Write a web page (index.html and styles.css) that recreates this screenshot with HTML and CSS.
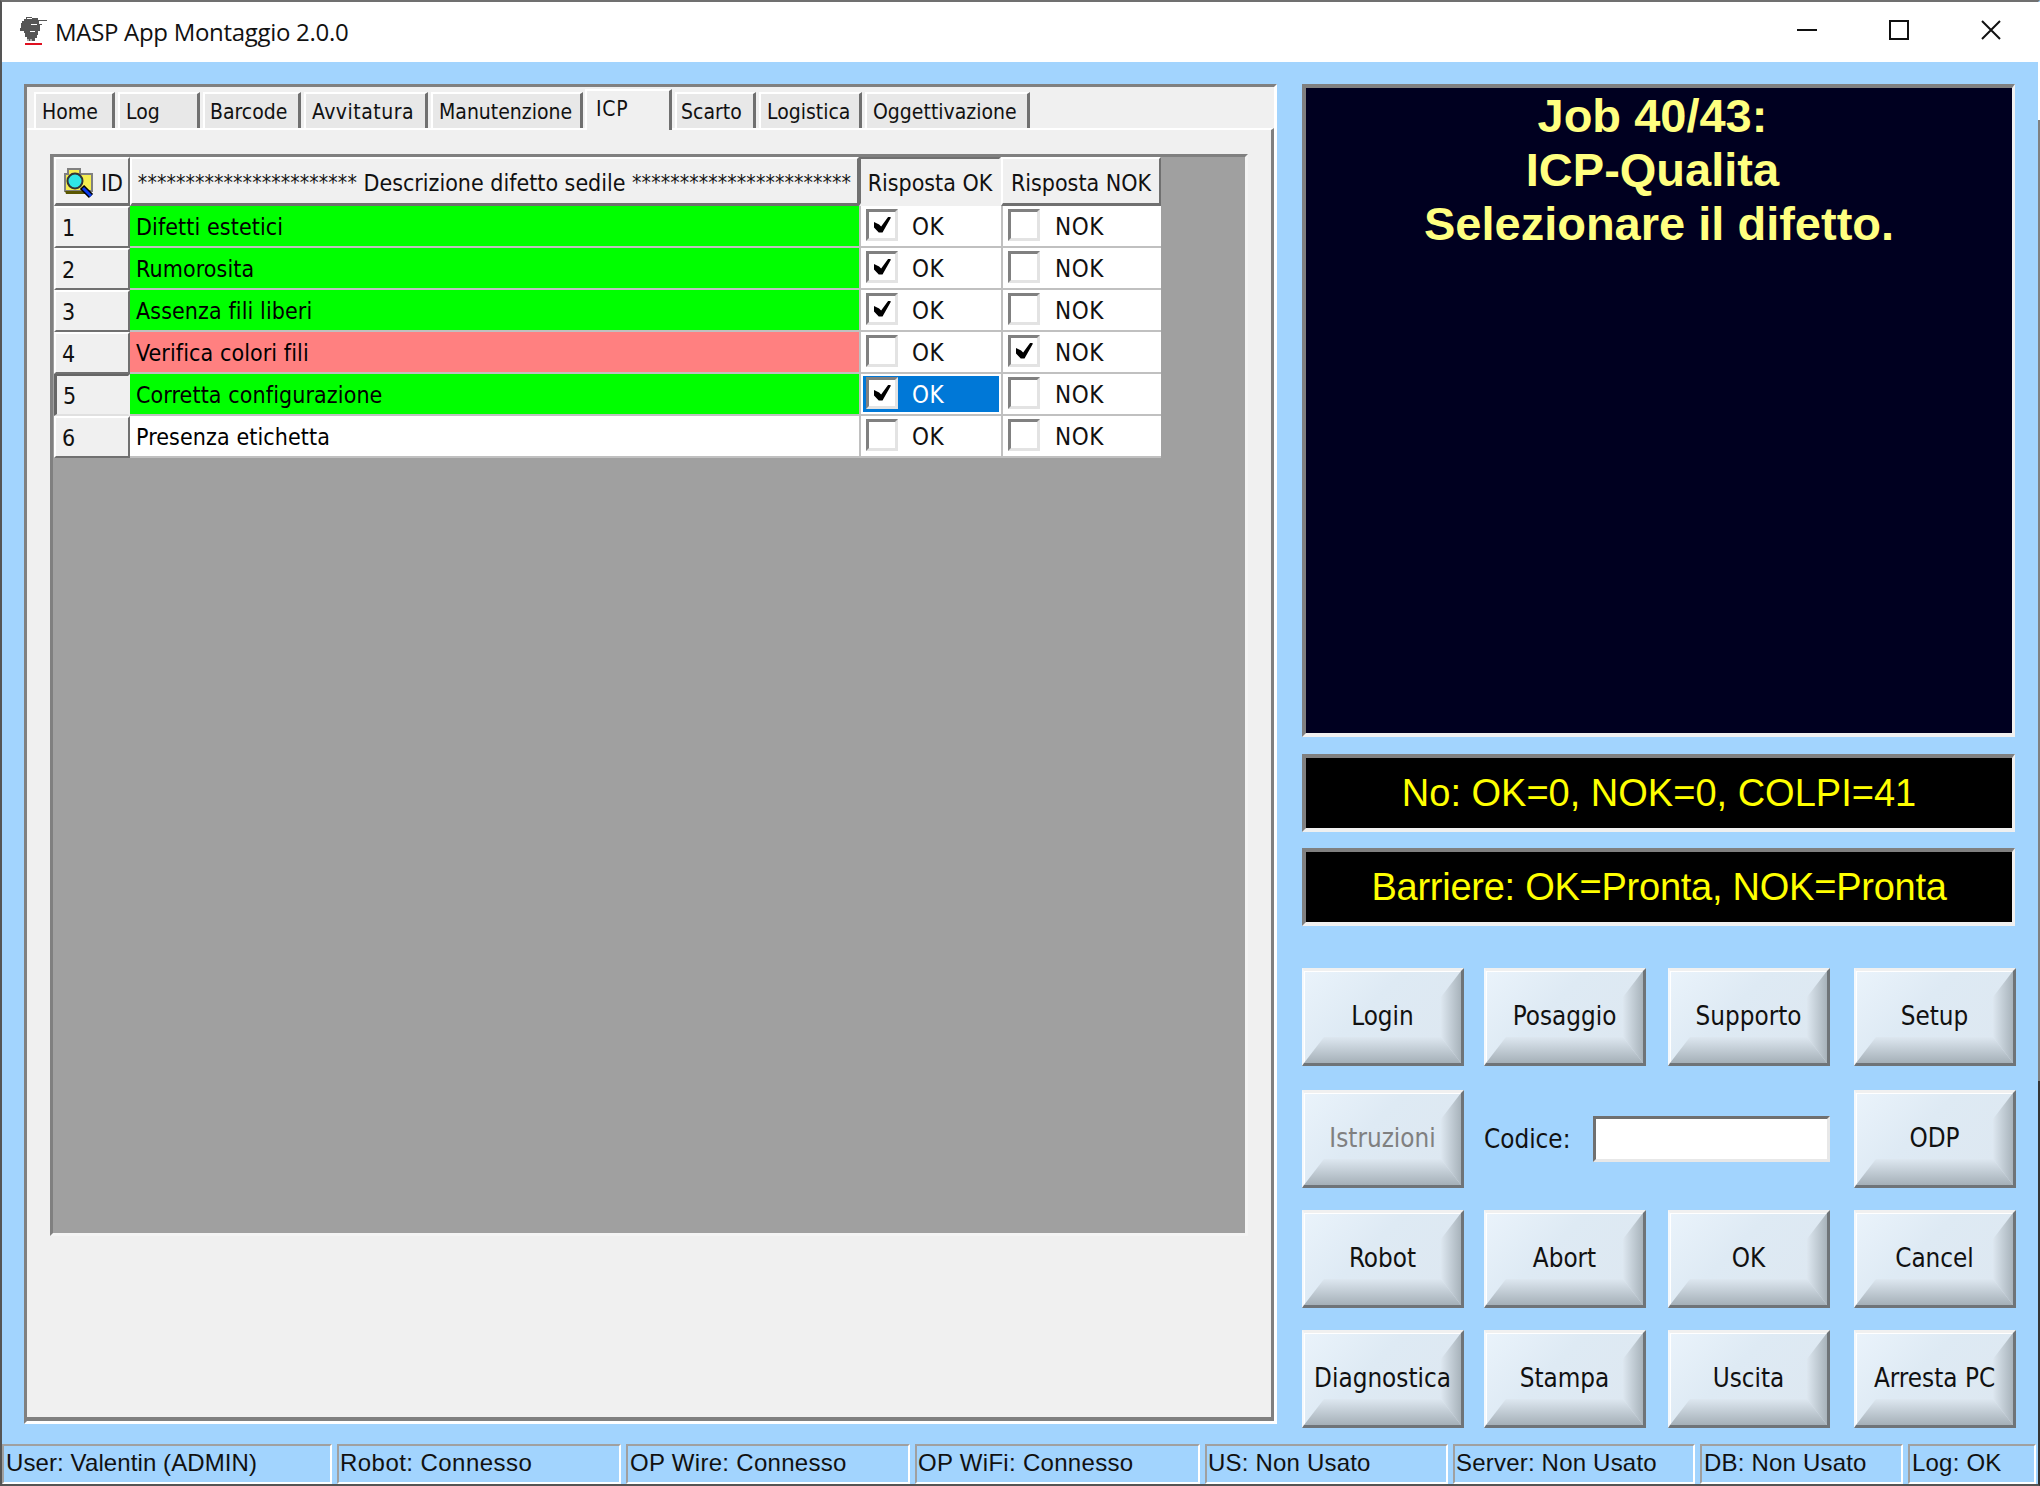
FILE: index.html
```html
<!DOCTYPE html>
<html lang="en">
<head>
    <meta charset="UTF-8">
    <meta name="viewport" content="width=device-width, initial-scale=1.0">
    <title>MASP App Montaggio 2.0.0</title>
    <link rel="stylesheet" href="styles.css">
</head>
<body>
    <div class="window">
        <div class="titlebar">
            <svg class="app-icon" width="30" height="32" viewBox="0 0 30 32">
                <path fill="#555" d="M7 2h6v1h6v2h9v1h-8v3h3v1h-2v6h-2v4h-1v3h-2v3H8v-4H6v-4H5v-2H1v-3h1V8h1V6h2V4h2z"/>
                <path fill="none" stroke="#fff" stroke-width="1" d="M8 3.5h5M12 9.5h6M11 16.5h5M9 24v3M12 24v3"/>
                <rect x="6" y="28" width="17" height="2" fill="#e01020"/>
            </svg>
            <span class="app-title">MASP App Montaggio 2.0.0</span>
            <div class="win-buttons">
                <svg width="22" height="22" viewBox="0 0 22 22"><path d="M1 11h20" stroke="#111" stroke-width="2"/></svg>
                <svg width="22" height="22" viewBox="0 0 22 22"><rect x="2" y="2" width="18" height="18" fill="none" stroke="#111" stroke-width="2"/></svg>
                <svg width="22" height="22" viewBox="0 0 22 22"><path d="M2 2l18 18M20 2L2 20" stroke="#111" stroke-width="2"/></svg>
            </div>
        </div>

        <div class="client">
            <div class="main">
                <div class="left-panel">
                    <div class="tabs">
                        <div class="tab w-home">Home</div>
                        <div class="tab w-log">Log</div>
                        <div class="tab w-barcode">Barcode</div>
                        <div class="tab w-avvit">Avvitatura</div>
                        <div class="tab w-manut">Manutenzione</div>
                        <div class="tab tab-active">ICP</div>
                        <div class="tab w-scarto">Scarto</div>
                        <div class="tab w-logist">Logistica</div>
                        <div class="tab w-ogg">Oggettivazione</div>
                    </div>
                    <div class="tab-body">
                        <div class="grid">
                            <div class="grid-row grid-head">
                                <div class="head-cell head-id">
                                    <svg width="30" height="32" viewBox="0 0 30 32">
                                        <path fill="#f5ee50" stroke="#808080" stroke-width="2" d="M1 7h3V2h12v5h12v17H1z"/>
                                        <path fill="#5a5600" d="M1 24h20v3H2z"/>
                                        <path d="M18 20l9 9" stroke="#000" stroke-width="6"/>
                                        <path d="M19 21l8 8" stroke="#0a3cf0" stroke-width="3"/>
                                        <circle cx="11" cy="14" r="7.5" fill="#2fe6e6" stroke="#333" stroke-width="2"/>
                                    </svg>
                                    <span>ID</span>
                                </div>
                                <div class="head-cell head-desc"><span class="stars">***********************</span>&nbsp;Descrizione difetto sedile&nbsp;<span class="stars">***********************</span></div>
                                <div class="head-cell head-ok">Risposta OK</div>
                                <div class="head-cell head-nok">Risposta NOK</div>
                            </div>

                            <div class="grid-row">
                                <div class="row-id">1</div>
                                <div class="desc green">Difetti estetici</div>
                                <div class="answer"><span class="check on"></span><span class="ans-ok">OK</span></div>
                                <div class="answer"><span class="check"></span><span class="ans-nok">NOK</span></div>
                            </div>
                            <div class="grid-row">
                                <div class="row-id">2</div>
                                <div class="desc green">Rumorosita</div>
                                <div class="answer"><span class="check on"></span><span class="ans-ok">OK</span></div>
                                <div class="answer"><span class="check"></span><span class="ans-nok">NOK</span></div>
                            </div>
                            <div class="grid-row">
                                <div class="row-id">3</div>
                                <div class="desc green">Assenza fili liberi</div>
                                <div class="answer"><span class="check on"></span><span class="ans-ok">OK</span></div>
                                <div class="answer"><span class="check"></span><span class="ans-nok">NOK</span></div>
                            </div>
                            <div class="grid-row">
                                <div class="row-id">4</div>
                                <div class="desc red">Verifica colori fili</div>
                                <div class="answer"><span class="check"></span><span class="ans-ok">OK</span></div>
                                <div class="answer"><span class="check on"></span><span class="ans-nok">NOK</span></div>
                            </div>
                            <div class="grid-row">
                                <div class="row-id row-id-current">5</div>
                                <div class="desc green">Corretta configurazione</div>
                                <div class="answer selected"><span class="check on"></span><span class="ans-ok">OK</span></div>
                                <div class="answer"><span class="check"></span><span class="ans-nok">NOK</span></div>
                            </div>
                            <div class="grid-row">
                                <div class="row-id">6</div>
                                <div class="desc">Presenza etichetta</div>
                                <div class="answer"><span class="check"></span><span class="ans-ok">OK</span></div>
                                <div class="answer"><span class="check"></span><span class="ans-nok">NOK</span></div>
                            </div>
                        </div>
                    </div>
                </div>

                <div class="right-panel">
                    <div class="inset job-box">Job 40/43:&nbsp;<br>ICP-Qualita&nbsp;<br>Selezionare il difetto.</div>
                    <div class="inset info-box">No: OK=0, NOK=0, COLPI=41</div>
                    <div class="inset info-box info-narrow">Barriere: OK=Pronta, NOK=Pronta</div>
                    <div class="buttons">
                        <button class="btn">Login</button>
                        <button class="btn">Posaggio</button>
                        <button class="btn">Supporto</button>
                        <button class="btn">Setup</button>
                        <button class="btn btn-disabled">Istruzioni</button>
                        <div class="code-field">
                            <label for="codice">Codice:</label>
                            <input type="text" id="codice">
                        </div>
                        <button class="btn">ODP</button>
                        <button class="btn">Robot</button>
                        <button class="btn">Abort</button>
                        <button class="btn">OK</button>
                        <button class="btn">Cancel</button>
                        <button class="btn">Diagnostica</button>
                        <button class="btn">Stampa</button>
                        <button class="btn">Uscita</button>
                        <button class="btn">Arresta PC</button>
                    </div>
                </div>
            </div>

            <div class="statusbar">
                <div class="status s-user">User: Valentin (ADMIN)</div>
                <div class="status s-robot">Robot: Connesso</div>
                <div class="status s-wire">OP Wire: Connesso</div>
                <div class="status s-wifi">OP WiFi: Connesso</div>
                <div class="status s-us">US: Non Usato</div>
                <div class="status s-server">Server: Non Usato</div>
                <div class="status s-db">DB: Non Usato</div>
                <div class="status s-log">Log: OK</div>
            </div>
        </div>
    </div>
</body>
</html>
```
FILE: styles.css
```css
* {
    box-sizing: border-box;
}
html, body {
    margin: 0;
    height: 100%;
}
body {
    font-family: "Liberation Sans", Arial, sans-serif;
    background-color: #a2d4fe;
    overflow: hidden;
}
.window {
    width: 2040px;
    height: 1486px;
    border: 2px solid #555;
    border-top-color: #707070;
    border-right-color: transparent;
    /* right frame edge changes colour down the window */
    background: linear-gradient(#fff 0 120px, #808080 120px 1081px, #333 1081px) right top / 2px 100% no-repeat border-box;
    display: flex;
    flex-direction: column;
}

/* title bar */
.titlebar {
    height: 60px;
    background: white;
    display: flex;
    align-items: center;
    flex-shrink: 0;
}
.app-icon {
    margin-left: 17px;
    margin-top: -2px;
}
.app-title {
    font-family: "Open Sans", sans-serif;
    font-size: 24px;
    color: #111;
    margin-left: 6px;
    margin-top: -2px;
    letter-spacing: -0.3px;
}
.win-buttons {
    margin-left: auto;
    margin-right: 36px;
    margin-top: -4px;
    display: flex;
    gap: 70px;
}

.client {
    flex: 1;
    display: flex;
    flex-direction: column;
    padding-top: 22px;
}
.main {
    display: flex;
    height: 1340px;
    padding-left: 22px;
}

/* left side */
.left-panel {
    width: 1253px;
    height: 1340px;
    background: #f0f0f0;
    border: 3px solid #808080;
    border-right-color: #fff;
    border-bottom-color: #fff;
    display: flex;
    flex-direction: column;
}
.tabs {
    display: flex;
    align-items: flex-end;
    height: 41px;
    padding-left: 7px;
    gap: 3px;
    font-family: "DejaVu Sans Condensed", "DejaVu Sans", sans-serif;
    font-size: 21px;
    color: #111;
}
.tab {
    height: 36px;
    background: #e8e8e8;
    border-top: 2px solid #fff;
    border-left: 2px solid #fff;
    border-right: 3px solid #707070;
    padding: 4px 0 0 6px;
    line-height: 28px;
    white-space: nowrap;
}
.tab-active {
    width: 87px;
    height: 41px;
    background: #f0f0f0;
    margin: 0 0 -2px -1px;
    padding: 4px 0 0 9px;
    position: relative;
    letter-spacing: 0.8px;
}
.w-home { width: 81px; }
.w-log { width: 82px; }
.w-barcode { width: 98px; padding-left: 5px; }
.w-avvit { width: 124px; letter-spacing: 0.5px; }
.w-manut { width: 152px; }
.w-scarto { width: 81px; padding-left: 4px; }
.w-logist { width: 103px; }
.w-ogg { width: 165px; }
.tab-body {
    flex: 1;
    border-top: 2px solid #fff;
    border-right: 3px solid #808080;
    border-bottom: 4px solid #808080;
    padding: 24px 0 0 23px;
}

/* defect grid */
.grid {
    width: 1198px;
    height: 1082px;
    background: #a0a0a0;
    border: 3px solid #808080;
    border-right-color: #f4f4f4;
    border-bottom-color: #f4f4f4;
    padding-left: 1px;
    font-family: "DejaVu Sans Condensed", "DejaVu Sans", sans-serif;
    font-size: 23px;
    color: #111;
}
.grid-row {
    display: grid;
    grid-template-columns: 76px 729px 142px 160px;
    height: 42px;
}
.grid-head {
    height: 49px;
}
.head-cell {
    background: #f0f0f0;
    border-top: 2px solid #fff;
    border-left: 2px solid #fff;
    border-right: 2px solid #707070;
    border-bottom: 3px solid #707070;
    display: flex;
    align-items: center;
    justify-content: center;
    white-space: nowrap;
    padding-top: 3px;
}
.head-id {
    justify-content: flex-start;
    padding-left: 8px;
    gap: 7px;
}
.stars {
    font-size: 21px;
    letter-spacing: 0.08px;
}
.head-ok {
    border-top-color: #707070;
    border-left: 2px solid #707070;
    border-right-color: #f0f0f0;
    border-bottom-color: #f0f0f0;
}
.row-id {
    background: #f0f0f0;
    border-top: 2px solid #fff;
    border-left: 2px solid #fff;
    border-right: 2px solid #707070;
    border-bottom: 2px solid #707070;
    padding: 3px 0 0 6px;
    line-height: 34px;
}
.row-id-current {
    border-left: 3px solid #666;
    border-top-color: #666;
    border-right-color: #f0f0f0;
    border-bottom-color: #e0e0e0;
}
.desc {
    background: white;
    border-bottom: 2px solid #c0c0c0;
    padding-left: 6px;
    line-height: 38px;
    padding-top: 2px;
    color: #000;
    letter-spacing: 0.1px;
}
.green {
    background: #00ff00;
}
.red {
    background: #ff8080;
}
.answer {
    background: white;
    border-left: 2px solid #c0c0c0;
    border-bottom: 2px solid #c0c0c0;
    display: flex;
    align-items: center;
    padding-left: 5px;
    position: relative;
    font-size: 24px;
    letter-spacing: 0.5px;
}
.selected::after {
    content: "";
    position: absolute;
    left: 2px;
    right: 2px;
    top: 2px;
    bottom: 2px;
    background: #0078d7;
    z-index: 0;
}
.selected span {
    position: relative;
    z-index: 1;
}
.selected .ans-ok {
    color: white;
}
.check {
    width: 32px;
    height: 32px;
    background: white;
    border: 3px solid #808080;
    border-right-color: #e3e3e3;
    border-bottom-color: #e3e3e3;
    flex-shrink: 0;
    margin-top: -3px;
    position: relative;
}
.check.on::before {
    content: "";
    position: absolute;
    left: 5px;
    top: 5px;
    width: 17px;
    height: 16px;
    background: #000;
    clip-path: polygon(0 35%, 30% 50%, 42% 62%, 85% 0, 100% 6%, 50% 100%, 28% 100%, 0 68%);
}
.ans-ok {
    margin-left: 14px;
    padding-top: 2px;
}
.ans-nok {
    margin-left: 15px;
    padding-top: 2px;
}

/* right side */
.right-panel {
    width: 713px;
    margin-left: 25px;
}
.inset {
    background: black;
    border: 4px solid #808080;
    border-right: 3px solid #f0f0f0;
    border-bottom: 4px solid #f0f0f0;
    text-align: center;
}
.job-box {
    height: 653px;
    padding-top: 1px;
    background: #000020;
    color: #ffff80;
    font-size: 47px;
    font-weight: bold;
    line-height: 54px;
}
.info-box {
    height: 78px;
    margin-top: 17px;
    color: #ffff00;
    font-size: 38px;
    line-height: 70px;
}
.info-box + .info-box {
    margin-top: 16px;
}
.info-narrow {
    letter-spacing: -0.25px;
}
.buttons {
    margin-top: 42px;
    display: grid;
    grid-template-columns: 182px 184px 186px 162px;
    grid-template-rows: 122px 120px 120px 98px;
    width: 714px;
}
.btn {
    position: relative;
    isolation: isolate;
    overflow: hidden;
    width: 162px;
    height: 98px;
    padding: 0 0 2px;
    font-family: "DejaVu Sans Condensed", "DejaVu Sans", sans-serif;
    font-size: 25.8px;
    color: #111;
    background: linear-gradient(135deg, #eaf3fb 0%, #deeaf4 40%, #dde7f0 100%);
    border: 2px solid #f4f8fc;
    border-top: 3px solid #f0f0f0;
    border-right: 3px solid #6f7478;
    border-bottom: 3px solid #6f7478;
    box-shadow: inset 1px 1px 0 #fff;
}
.btn::before,
.btn::after {
    content: "";
    position: absolute;
    left: 0;
    top: 0;
    right: 0;
    bottom: 0;
    z-index: -1;
}
/* skin bevels */
.btn::before {
    background: linear-gradient(to right, #dde7f0 calc(100% - 20px), #a8b3bb 100%);
    clip-path: polygon(100% 0, 100% 100%, calc(100% - 20px) calc(100% - 26px), calc(100% - 20px) 26px);
}
.btn::after {
    background: linear-gradient(to bottom, #dde7f0 calc(100% - 26px), #a5b0b8 100%);
    clip-path: polygon(0 100%, 20px calc(100% - 26px), calc(100% - 20px) calc(100% - 26px), 100% 100%);
}
.btn-disabled {
    color: #808080;
}
.code-field {
    grid-column: span 2;
    display: flex;
    align-items: center;
    height: 98px;
    font-family: "DejaVu Sans Condensed", "DejaVu Sans", sans-serif;
    font-size: 25.8px;
    color: #111;
}
.code-field label {
    width: 109px;
}
.code-field input {
    width: 237px;
    height: 46px;
    background: white;
    border: 3px solid #707070;
    border-right-color: #e8e8e8;
    border-bottom-color: #e8e8e8;
}

/* status bar */
.statusbar {
    display: flex;
    margin-top: 20px;
    height: 40px;
    gap: 5px;
}
.status {
    border: 2px solid #a0a0a0;
    border-right-color: white;
    border-bottom-color: white;
    font-size: 24px;
    line-height: 33px;
    padding-left: 2px;
    letter-spacing: 0.2px;
    color: #111;
    white-space: nowrap;
    overflow: hidden;
}
.s-user { width: 330px; letter-spacing: 0.1px; }
.s-robot { width: 284px; padding-left: 1px; letter-spacing: 0.45px; }
.s-wire { width: 284px; letter-spacing: 0.3px; }
.s-wifi { width: 285px; padding-left: 1px; letter-spacing: 0.3px; }
.s-us { width: 243px; padding-left: 1px; }
.s-server { width: 242px; padding-left: 1px; }
.s-db { width: 203px; }
.s-log { width: 128px; }
```
